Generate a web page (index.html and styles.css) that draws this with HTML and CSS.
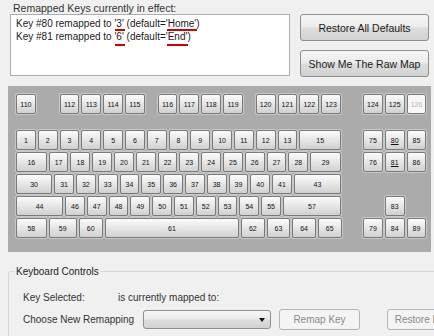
FILE: index.html
```html
<!DOCTYPE html>
<html lang="en">
<head>
  <meta charset="UTF-8" />
  <title>Key Remapper</title>
  <link rel="stylesheet" href="styles.css">
</head>
<body>
  <div class="top">
    <div class="remapped">
      <div class="caption">Remapped Keys currently in effect:</div>
      <div class="listbox">
        <div class="line">Key #80 remapped to <span class="mark">'3'</span> (default=<span class="mark">'Home'</span>)</div>
        <div class="line second">Key #81 remapped to <span class="mark">'6'</span> (default=<span class="mark">'End'</span>)</div>
      </div>
    </div>
    <div class="actions">
      <button class="btn">Restore All Defaults</button>
      <button class="btn">Show Me The Raw Map</button>
    </div>
  </div>

  <div class="keyboard">
    <div class="main">
      <div class="row fn">
        <div class="key">110</div>
        <div class="sp w1"></div>
        <div class="key">112</div><div class="key">113</div><div class="key">114</div><div class="key">115</div>
        <div class="sp w05"></div>
        <div class="key">116</div><div class="key">117</div><div class="key">118</div><div class="key">119</div>
        <div class="sp w05"></div>
        <div class="key">120</div><div class="key">121</div><div class="key">122</div><div class="key">123</div>
      </div>
      <div class="row">
        <div class="key">1</div><div class="key">2</div><div class="key">3</div><div class="key">4</div>
        <div class="key">5</div><div class="key">6</div><div class="key">7</div><div class="key">8</div>
        <div class="key">9</div><div class="key">10</div><div class="key">11</div><div class="key">12</div>
        <div class="key">13</div><div class="key w2">15</div>
      </div>
      <div class="row">
        <div class="key w15">16</div>
        <div class="key">17</div><div class="key">18</div><div class="key">19</div><div class="key">20</div>
        <div class="key">21</div><div class="key">22</div><div class="key">23</div><div class="key">24</div>
        <div class="key">25</div><div class="key">26</div><div class="key">27</div><div class="key">28</div>
        <div class="key w15">29</div>
      </div>
      <div class="row">
        <div class="key w175">30</div>
        <div class="key">31</div><div class="key">32</div><div class="key">33</div><div class="key">34</div>
        <div class="key">35</div><div class="key">36</div><div class="key">37</div><div class="key">38</div>
        <div class="key">39</div><div class="key">40</div><div class="key">41</div>
        <div class="key w225">43</div>
      </div>
      <div class="row">
        <div class="key w225">44</div>
        <div class="key">46</div><div class="key">47</div><div class="key">48</div><div class="key">49</div>
        <div class="key">50</div><div class="key">51</div><div class="key">52</div><div class="key">53</div>
        <div class="key">54</div><div class="key">55</div>
        <div class="key w275">57</div>
      </div>
      <div class="row">
        <div class="key w15">58</div>
        <div class="key w1375">59</div>
        <div class="key w12">60</div>
        <div class="key w625">61</div>
        <div class="key w1175">62</div><div class="key w1175">63</div><div class="key w1175">64</div><div class="key w1175">65</div>
      </div>
    </div>

    <div class="nav">
      <div class="row fn">
        <div class="key">124</div><div class="key">125</div><div class="key off">126</div>
      </div>
      <div class="row">
        <div class="key">75</div><div class="key"><u>80</u></div><div class="key">85</div>
      </div>
      <div class="row">
        <div class="key">76</div><div class="key"><u>81</u></div><div class="key">86</div>
      </div>
      <div class="row"></div>
      <div class="row">
        <div class="sp w1"></div><div class="key">83</div>
      </div>
      <div class="row">
        <div class="key">79</div><div class="key">84</div><div class="key">89</div>
      </div>
    </div>
  </div>

  <fieldset class="controls">
    <legend>Keyboard Controls</legend>
    <div class="field-row first">
      <span class="lbl-sel">Key Selected:</span>
      <span>is currently mapped to:</span>
    </div>
    <div class="field-row">
      <span class="lbl-new">Choose New Remapping</span>
      <div class="combo"><span class="arrow"></span></div>
      <button class="btn small" disabled>Remap Key</button>
      <button class="btn small wide" disabled>Restore Defaults</button>
    </div>
  </fieldset>
</body>
</html>
```

FILE: styles.css
```css
* {
  box-sizing: border-box;
}

body {
  margin: 0;
  width: 434px;
  height: 336px;
  overflow: hidden;
  background: #f0f0f0;
  font-family: "Liberation Sans", Arial, sans-serif;
  font-size: 10.5px;
  color: #1a1a1a;
}

/* remapped list + buttons */
.top {
  display: flex;
  padding: 2px 0 0 10px;
}

.caption {
  height: 12px;
  line-height: 12px;
  padding-left: 3px;
  color: #333;
}

.listbox {
  width: 280px;
  height: 62px;
  background: #ffffff;
  border: 1px solid #a9aeb4;
  padding: 3px 5px;
  font-size: 10px;
  line-height: 12.5px;
}

.mark {
  position: relative;
}

.mark::after {
  content: "";
  position: absolute;
  left: 1px;
  right: -1px;
  bottom: -2px;
  height: 2px;
  background: #d40000;
}

.second .mark::after {
  bottom: -4px;
}

.actions {
  display: flex;
  flex-direction: column;
  gap: 9px;
  margin-left: 10px;
  padding-top: 12px;
}

.btn {
  width: 129px;
  height: 27px;
  font: inherit;
  color: #1a1a1a;
  border: 1px solid #8e8f8f;
  border-radius: 3px;
  background: linear-gradient(#f6f6f6 0%, #ebebeb 48%, #dddddd 52%, #d2d2d2 100%);
  padding: 0;
  white-space: nowrap;
}

.btn.small {
  flex: none;
  width: 81px;
  height: 21px;
  margin-left: 8px;
}

.btn.wide {
  width: 90px;
  margin-left: 27px;
}

.btn:disabled {
  color: #8a8a8a;
  border-color: #b3b6b8;
  background: #f4f4f4;
}

/* keyboard */
.keyboard {
  --u: 21.8px;
  display: flex;
  gap: 20px;
  margin: 9px 0 0 8px;
  width: 423px;
  height: 166px;
  background: #ababab;
  padding: 7px 0 0 7px;
}

.main {
  width: calc(var(--u) * 15);
}

.nav {
  width: calc(var(--u) * 3);
}

.row {
  display: flex;
  height: 22px;
}

.row.fn {
  margin-bottom: 14px;
}

.key {
  flex: none;
  width: calc(var(--u) - 2px);
  height: 20px;
  margin: 1px;
  display: flex;
  align-items: center;
  justify-content: center;
  border: 1px solid #7a7a7a;
  border-radius: 2px;
  background: linear-gradient(#fbfbfb, #e4e4e4 55%, #d0d0d0);
  box-shadow: 0 0 0 1px rgba(255, 255, 255, 0.35);
  font-size: 7px;
  color: #111;
}

.key.off {
  background: #f7f7f7;
  color: #b4b4b4;
}

.sp {
  flex: none;
}

.sp.w1 { width: var(--u); }
.sp.w05 { width: calc(var(--u) * 0.5); }

.key.w12 { width: calc(var(--u) * 1.2 - 2px); }
.key.w1175 { width: calc(var(--u) * 1.175 - 2px); }
.key.w1375 { width: calc(var(--u) * 1.375 - 2px); }
.key.w15 { width: calc(var(--u) * 1.5 - 2px); }
.key.w175 { width: calc(var(--u) * 1.75 - 2px); }
.key.w2 { width: calc(var(--u) * 2 - 2px); }
.key.w225 { width: calc(var(--u) * 2.25 - 2px); }
.key.w275 { width: calc(var(--u) * 2.75 - 2px); }
.key.w625 { width: calc(var(--u) * 6.25 - 2px); }

/* keyboard controls group */
.controls {
  margin: 14px 0 0 8px;
  width: 480px;
  height: 90px;
  border: 1px solid #d3d8dc;
  border-radius: 3px;
  padding: 0 0 0 6px;
  font-size: 10px;
}

.controls legend {
  padding: 0 1px;
  font-size: 10px;
  color: #222;
}

.field-row {
  display: flex;
  align-items: center;
  padding-left: 8px;
  color: #333;
  white-space: nowrap;
}

.field-row.first {
  margin-top: 13px;
  height: 14px;
}

.field-row + .field-row {
  margin-top: 5px;
}

.lbl-sel {
  width: 95px;
}

.lbl-new {
  flex: none;
  width: 120px;
}

.combo {
  flex: none;
  position: relative;
  width: 128px;
  height: 19px;
  border: 1px solid #8e8f8f;
  border-radius: 3px;
  background: linear-gradient(#f6f6f6 0%, #ebebeb 48%, #dddddd 52%, #d2d2d2 100%);
}

.arrow {
  position: absolute;
  right: 5px;
  top: 7px;
  border-left: 3px solid transparent;
  border-right: 3px solid transparent;
  border-top: 4px solid #111;
}
```
